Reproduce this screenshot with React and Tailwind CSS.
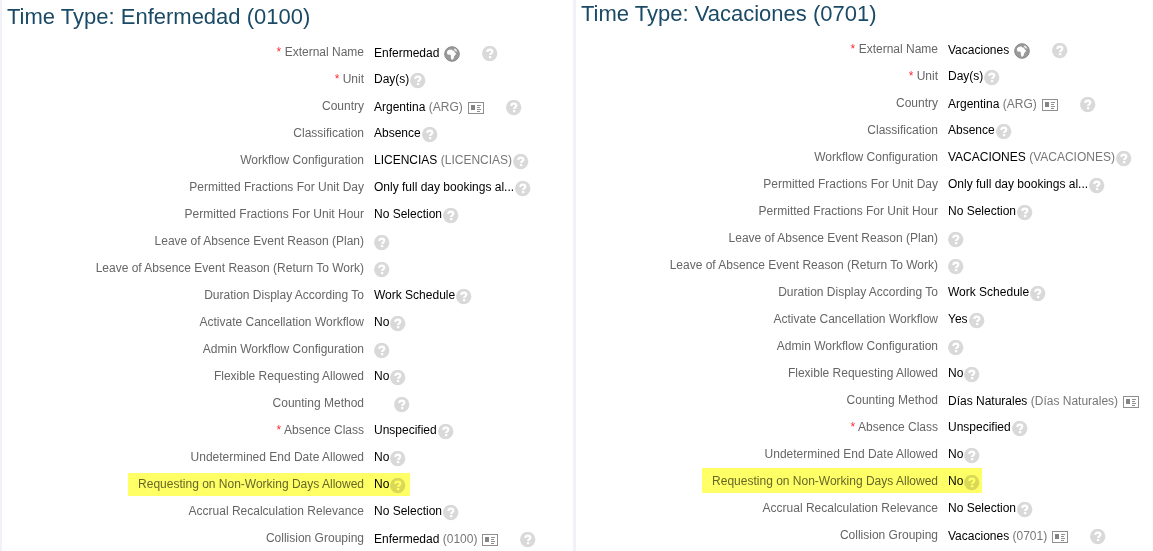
const enfermedad = [
  { label: 'External Name', required: true, value: 'Enfermedad', icon: 'globe' },
  { label: 'Unit', required: true, value: 'Day(s)' },
  { label: 'Country', value: 'Argentina', code: 'ARG', icon: 'card' },
  { label: 'Classification', value: 'Absence' },
  { label: 'Workflow Configuration', value: 'LICENCIAS', code: 'LICENCIAS' },
  { label: 'Permitted Fractions For Unit Day', value: 'Only full day bookings al...' },
  { label: 'Permitted Fractions For Unit Hour', value: 'No Selection' },
  { label: 'Leave of Absence Event Reason (Plan)' },
  { label: 'Leave of Absence Event Reason (Return To Work)' },
  { label: 'Duration Display According To', value: 'Work Schedule' },
  { label: 'Activate Cancellation Workflow', value: 'No' },
  { label: 'Admin Workflow Configuration' },
  { label: 'Flexible Requesting Allowed', value: 'No' },
  { label: 'Counting Method', spaced: true },
  { label: 'Absence Class', required: true, value: 'Unspecified' },
  { label: 'Undetermined End Date Allowed', value: 'No' },
  { label: 'Requesting on Non-Working Days Allowed', value: 'No', marked: true },
  { label: 'Accrual Recalculation Relevance', value: 'No Selection' },
  { label: 'Collision Grouping', value: 'Enfermedad', code: '0100', icon: 'card' },
];

const vacaciones = [
  { label: 'External Name', required: true, value: 'Vacaciones', icon: 'globe' },
  { label: 'Unit', required: true, value: 'Day(s)' },
  { label: 'Country', value: 'Argentina', code: 'ARG', icon: 'card' },
  { label: 'Classification', value: 'Absence' },
  { label: 'Workflow Configuration', value: 'VACACIONES', code: 'VACACIONES' },
  { label: 'Permitted Fractions For Unit Day', value: 'Only full day bookings al...' },
  { label: 'Permitted Fractions For Unit Hour', value: 'No Selection' },
  { label: 'Leave of Absence Event Reason (Plan)' },
  { label: 'Leave of Absence Event Reason (Return To Work)' },
  { label: 'Duration Display According To', value: 'Work Schedule' },
  { label: 'Activate Cancellation Workflow', value: 'Yes' },
  { label: 'Admin Workflow Configuration' },
  { label: 'Flexible Requesting Allowed', value: 'No' },
  { label: 'Counting Method', value: 'Días Naturales', code: 'Días Naturales', icon: 'card', noHelp: true },
  { label: 'Absence Class', required: true, value: 'Unspecified' },
  { label: 'Undetermined End Date Allowed', value: 'No' },
  { label: 'Requesting on Non-Working Days Allowed', value: 'No', marked: true },
  { label: 'Accrual Recalculation Relevance', value: 'No Selection' },
  { label: 'Collision Grouping', value: 'Vacaciones', code: '0701', icon: 'card' },
];

function HelpIcon() {
  return (
    <svg viewBox="0 0 16 16" className="block h-4 w-4">
      <circle cx="7.7" cy="7.5" r="7.7" fill="#d9d9d9" />
      <path d="M5.300 6C5.400 4.300 6.300 3.700 7.800 3.700c1.600 0 2.500.8 2.500 2 0 1.700-2.200 1.700-2.200 3.300" fill="none" stroke="#fff" strokeWidth="2.200" />
      <rect x="6.900" y="10" width="2.400" height="2.200" fill="#fff" />
    </svg>
  );
}

function GlobeIcon() {
  return (
    <svg viewBox="0 0 16 16" className="block h-4 w-4">
      <circle cx="8" cy="8" r="7.3" fill="#9a9a9a" stroke="#868686" />
      <path d="M3 5.600 4.600 3.900l2.600-.4 1.300.9 1.500.3.900 2.100 1.300.5-.9 1.700-1.200 1.300-.2 1.800-1.500 1.600-1-.3-.6-2.300.1-1.500-1-1-1.900.1-1-1.300z" fill="#fff" />
      <path d="m9.800 3 1.300-.4 1.600 1.300.6 1.600-1.400.1-1.200-1.100z" fill="#eee" />
    </svg>
  );
}

function CardIcon() {
  return (
    <svg viewBox="0 0 16 12" className="block h-3 w-4" shapeRendering="crispEdges">
      <rect width="16" height="12" fill="#8f8f8f" />
      <rect x="1" y="1" width="14" height="10" fill="#fff" />
      <rect x="3" y="3" width="4" height="5" fill="#858585" />
      <path d="M9 3h4v1H9zM9 5h3v1H9zM9 7h4v1H9zM9 9h3v1H9z" fill="#8f8f8f" />
    </svg>
  );
}

function Field({ field, markClass }) {
  const { label, required, value, code, icon, spaced, noHelp, marked } = field;
  const helpGap = icon ? 'ml-3' : spaced ? 'ml-[10px]' : value ? '-ml-[9px]' : '-ml-[10px]';

  return (
    <div className="relative flex h-[27px] gap-[10px] whitespace-nowrap">
      <dt className="w-[362px] shrink-0 pt-[5px] text-right text-[#666]">
        {required && <span className="text-red-500">* </span>}
        {label}
      </dt>
      <dd className={`flex text-black ${icon ? 'pt-[6px]' : 'pt-[5px]'}`}>
        {value}
        {code && <span className="text-[#777]">&nbsp;({code})</span>}
      </dd>
      {icon && (
        <button type="button" aria-label={`Open ${label}`} className={`-ml-[5px] self-start ${icon === 'card' ? 'mt-[9px]' : 'mt-[7px]'}`}>
          {icon === 'card' ? <CardIcon /> : <GlobeIcon />}
        </button>
      )}
      {!noHelp && (
        <button type="button" aria-label={`Help for ${label}`} className={`mt-[7px] self-start ${helpGap}`}>
          <HelpIcon />
        </button>
      )}
      {marked && <span className={`pointer-events-none absolute left-[126px] bg-[#ffff66] mix-blend-multiply ${markClass}`} />}
    </div>
  );
}

function TimeType({ title, fields, className, markClass }) {
  return (
    <section className={`border-[#f1f1f8] ${className}`}>
      <h2 className="mb-[9px] pl-[5px] text-[22px] leading-[26px] text-[#1b4a66]">Time Type: {title}</h2>
      <dl className="text-[12px] leading-4">
        {fields.map((field) => (
          <Field key={field.label} field={field} markClass={markClass} />
        ))}
      </dl>
    </section>
  );
}

export default function App() {
  return (
    <main className="grid min-h-screen grid-cols-[573fr_580fr] overflow-hidden bg-white font-['Liberation_Sans',Arial,sans-serif]">
      <TimeType title="Enfermedad (0100)" fields={enfermedad} className="border-l-2 pt-1" markClass="top-[2px] h-[23px] w-[282px]" />
      <TimeType title="Vacaciones (0701)" fields={vacaciones} className="border-l-3 pt-px" markClass="top-0 h-[25px] w-[280px]" />
    </main>
  );
}
